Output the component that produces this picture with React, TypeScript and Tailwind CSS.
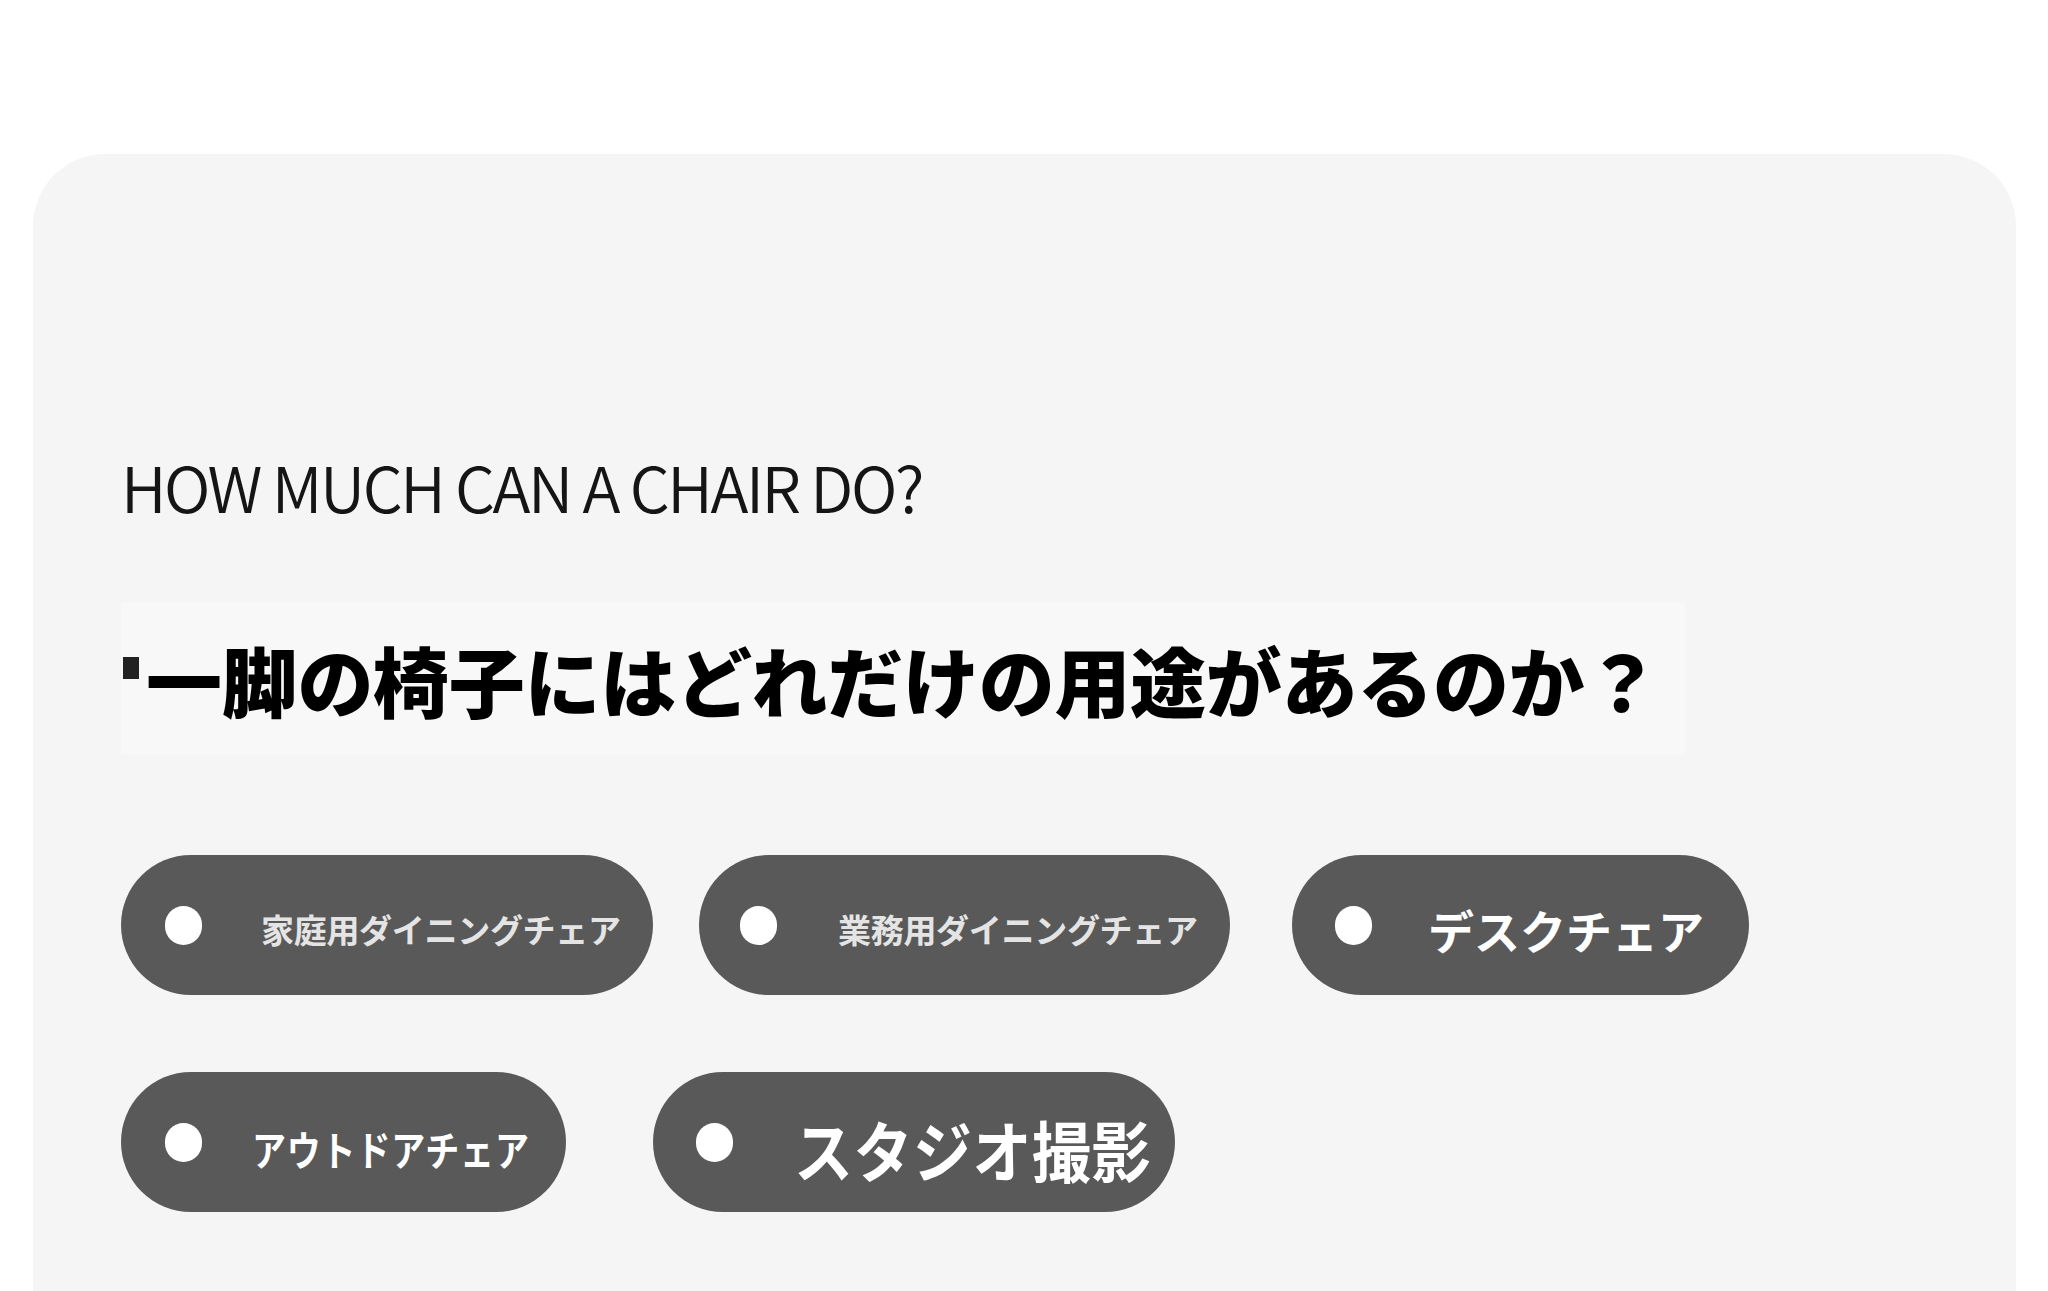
import React from "react";

const jp = { fontFamily: '"Noto Sans CJK JP", "Noto Sans", sans-serif' };

function Dot() {
  return <span className="block w-[37px] h-[39px] rounded-full bg-white shrink-0" />;
}

export default function App() {
  return (
    <div className="bg-white w-[2048px] h-[1291px] overflow-hidden pt-[154px] pl-[33px]" style={jp}>
      <div className="bg-[#f5f5f5] w-[1983px] h-[1140px] rounded-t-[72px] pl-[88px] pt-[300px]">
        <h2 className="text-[63px] leading-[64px] font-[350] text-[#151515] tracking-[-2.4px]">
          HOW MUCH CAN A CHAIR DO?
        </h2>
        <div className="mt-[85px] w-[1564px] h-[152px] bg-[#f8f8f8] flex items-center relative">
          <span className="absolute left-[2px] top-[54px] w-[16px] h-[22px] bg-[#222]" />
          <h1 className="ml-[25px] text-[76px] leading-[76px] font-black text-black tracking-[-0.3px]">
            一脚の椅子にはどれだけの用途があるのか？
          </h1>
        </div>
        <div className="mt-[100px] flex">
          <div className="w-[532px] h-[140px] rounded-full bg-[#595959] flex items-center pl-[44px]">
            <Dot />
            <span className="ml-[59px] text-[33px] font-bold text-[#e4e4e4] mt-[10px] tracking-[-0.3px]">家庭用ダイニングチェア</span>
          </div>
          <div className="ml-[46px] w-[531px] h-[140px] rounded-full bg-[#595959] flex items-center pl-[41px]">
            <Dot />
            <span className="ml-[61px] text-[33px] font-bold text-[#e4e4e4] mt-[10px] tracking-[-0.3px]">業務用ダイニングチェア</span>
          </div>
          <div className="ml-[62px] w-[457px] h-[140px] rounded-full bg-[#595959] flex items-center pl-[43px]">
            <Dot />
            <span className="ml-[56px] text-[46px] font-bold text-white mt-[8px]">デスクチェア</span>
          </div>
        </div>
        <div className="mt-[77px] flex">
          <div className="w-[445px] h-[140px] rounded-full bg-[#595959] flex items-center pl-[44px]">
            <Dot />
            <span className="ml-[50px] text-[34px] font-bold text-white mt-[12px] scale-y-[1.2] tracking-[0.8px]">アウトドアチェア</span>
          </div>
          <div className="ml-[87px] w-[522px] h-[140px] rounded-full bg-[#595959] flex items-center pl-[43px]">
            <Dot />
            <span className="ml-[61px] text-[59px] font-bold text-white mt-[14px] scale-y-[1.12] tracking-[0.5px]">スタジオ撮影</span>
          </div>
        </div>
      </div>
    </div>
  );
}
